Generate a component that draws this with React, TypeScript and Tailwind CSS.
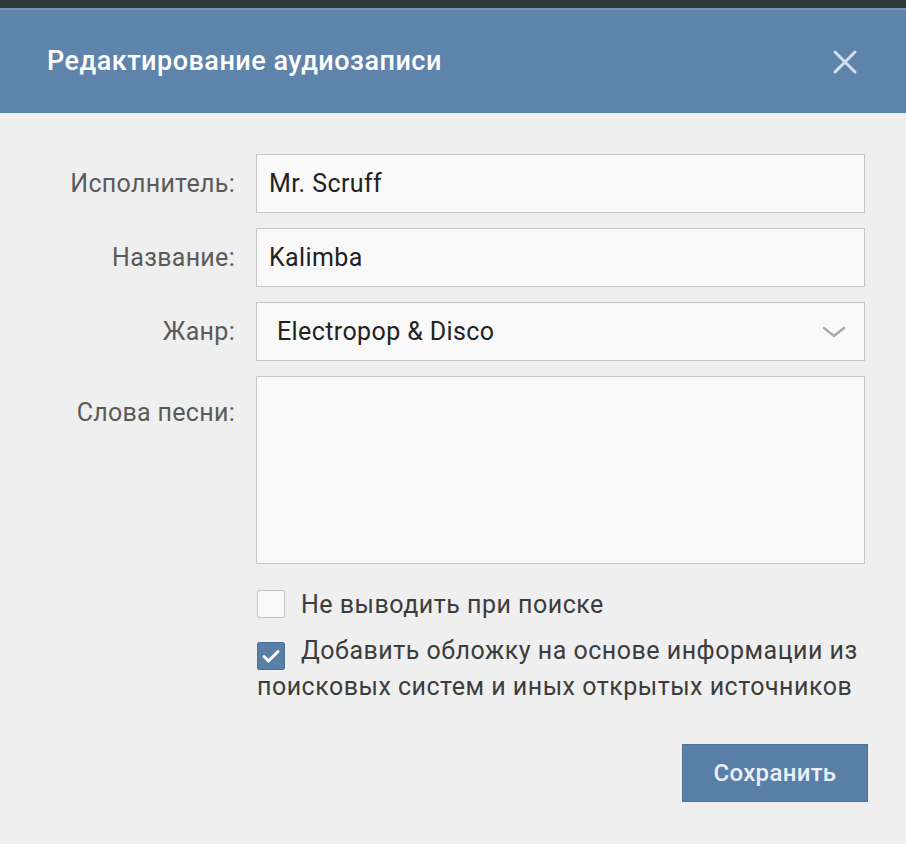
import { useState } from "react"

const fieldBox =
  "h-[59px] w-[609px] border border-[#c6c6c6] bg-[#f9f9f9] px-[12px] flex items-center text-[25px] tracking-[0.4px] text-[#222]"

function Label({ children, top = false }: { children: string; top?: boolean }) {
  return (
    <div
      className={`w-[235px] text-right text-[25px] tracking-[0.3px] text-[#5a5a5a] ${
        top ? "pt-[18px]" : "h-[59px] flex items-center justify-end"
      }`}
    >
      {children}
    </div>
  )
}

function Checkbox({ checked }: { checked: boolean }) {
  return checked ? (
    <span className="inline-flex align-[-5px] w-[28px] h-[28px] mr-[16px] items-center justify-center rounded-[2px] bg-[#5a7fa7] border border-[#4d6f96]">
      <svg width="20" height="16" viewBox="0 0 20 16">
        <path d="M3 8.5l4.5 4.5L17 3.5" fill="none" stroke="#ffffff" strokeWidth="3" strokeLinecap="round" strokeLinejoin="round" />
      </svg>
    </span>
  ) : (
    <span className="inline-block align-[-5px] w-[28px] h-[28px] mr-[16px] rounded-[2px] bg-[#f9f9f9] border border-[#c4c4c4]" />
  )
}

export default function App() {
  const [artist] = useState("Mr. Scruff")
  const [title] = useState("Kalimba")

  return (
    <div className="w-[906px] h-[844px] bg-[#efefef] flex flex-col" style={{ fontFamily: "Roboto, 'Liberation Sans', sans-serif" }}>
      <div className="h-[8px] bg-[#2f3b3b]" />
      <div className="h-[105px] bg-[#5f84ac] border-t-[2px] border-[#7393b8] flex items-center justify-between pl-[47px] pr-[48px]">
        <h1 className="text-[27px] font-medium text-white tracking-[0.5px]">Редактирование аудиозаписи</h1>
        <svg width="26" height="26" viewBox="0 0 26 26">
          <path d="M3 3l20 20M23 3L3 23" stroke="#d3e1f0" strokeWidth="3" strokeLinecap="round" />
        </svg>
      </div>

      <div className="pt-[41px] flex flex-col gap-[15px]">
        <div className="flex gap-[21px]">
          <Label>Исполнитель:</Label>
          <div className={fieldBox}>{artist}</div>
        </div>
        <div className="flex gap-[21px]">
          <Label>Название:</Label>
          <div className={fieldBox}>{title}</div>
        </div>
        <div className="flex gap-[21px]">
          <Label>Жанр:</Label>
          <div className={`${fieldBox} justify-between pl-[20px] pr-[18px]`}>
            <span>Electropop &amp; Disco</span>
            <svg width="24" height="12" viewBox="0 0 24 12">
              <path d="M2 2l10 8 10-8" fill="none" stroke="#a9a9a9" strokeWidth="2.4" strokeLinecap="round" strokeLinejoin="round" />
            </svg>
          </div>
        </div>
        <div className="flex gap-[21px]">
          <Label top>Слова песни:</Label>
          <div className="h-[188px] w-[609px] border border-[#c6c6c6] bg-[#f9f9f9]" />
        </div>
      </div>

      <div className="ml-[257px] w-[620px] mt-[24px] text-[25px] tracking-[0.5px] text-[#3c3c3c] leading-[34px]">
        <div>
          <Checkbox checked={false} />
          Не выводить при поиске
        </div>
        <div className="mt-[12px]">
          <Checkbox checked />
          Добавить обложку на основе информации из
          <br />
          поисковых систем и иных открытых источников
        </div>
        <div className="flex justify-end mt-[40px] pr-[9px]">
          <button className="w-[186px] h-[58px] bg-[#5a7fa7] border border-[#4f7399] text-[24px] tracking-[0.3px] font-medium text-[#e8f0f9]">
            Сохранить
          </button>
        </div>
      </div>
    </div>
  )
}
